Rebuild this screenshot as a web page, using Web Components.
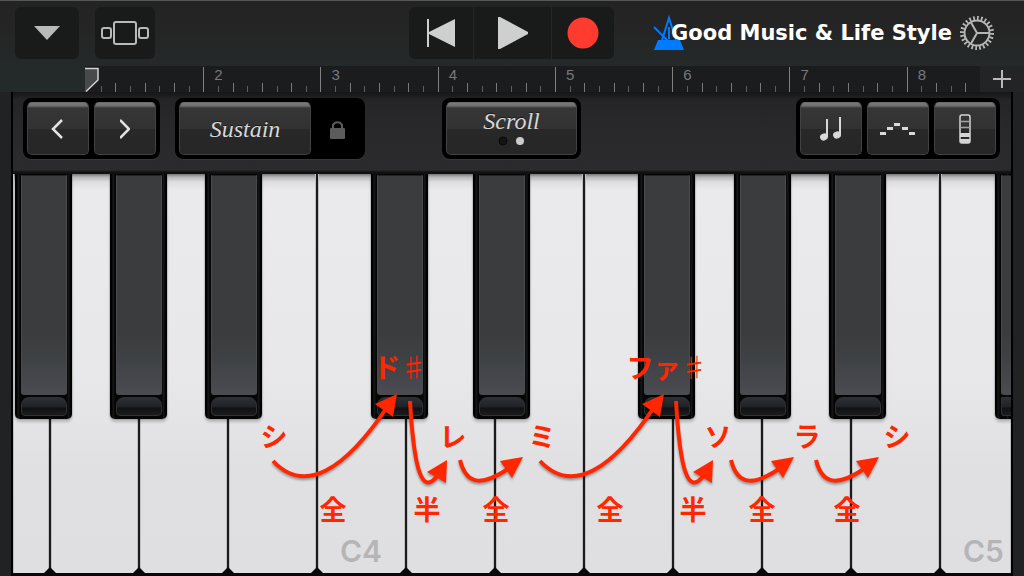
<!DOCTYPE html>
<html lang="ja">
<head>
<meta charset="utf-8">
<title>Keyboard</title>
<style>
  html, body { margin: 0; background: #212224; }
  body { font-family: "Liberation Sans", sans-serif; }
</style>
</head>
<body>
<studio-app></studio-app>

<script>
const define = (name, html, setup) => customElements.define(name, class extends HTMLElement {
  constructor() {
    super();
    this.attachShadow({ mode: "open" }).innerHTML = html;
  }
  connectedCallback() { if (setup) setup(this, this.shadowRoot); }
});

/* Flat button of the top bar */
define("bar-button", `
<style>
  :host { display: block; }
  button { display: grid; place-items: center; width: 100%; height: 100%; margin: 0; padding: 0; border: 0; background: none; color: #d0d0d0; cursor: pointer; }
</style>
<button type="button"><slot></slot></button>`,
(el, root) => root.querySelector("button").setAttribute("aria-label", el.getAttribute("label")));

define("top-bar", `
<style>
  :host { display: grid; grid-template-columns: 1fr auto 1fr; align-items: center; height: 66px; box-sizing: border-box;
    padding: 0 30px 1px 15px; border-top: 1px solid #565757; background: linear-gradient(#232323, #252525 50%, #24292a); }
  svg { display: block; }
  .left { display: flex; gap: 16px; }
  .tile, .transport { height: 52px; border-radius: 6px; background: #191a1a; }
  .transport { display: flex; margin-left: 14px; }
  .transport > * + * { border-left: 1px solid #242525; }
  .w60 { width: 60px; } .w64 { width: 64px; } .w62 { width: 62px; } .w77 { width: 77px; }
  .right { display: flex; justify-content: flex-end; align-items: center; }
  .title { margin: 0 8px 0 -14px; position: relative; color: #fff; font: bold 21px/28px "DejaVu Sans", sans-serif; white-space: nowrap; pointer-events: none; }
</style>
<div class="left">
  <bar-button class="tile w64" label="Menu"><svg width="28" height="16"><path d="M1 1h26L14 15z" fill="#b9b9b9"/></svg></bar-button>
  <bar-button class="tile w60" label="Browser"><svg width="48" height="24" fill="none" stroke="#b9b9b9" stroke-width="2"><rect x="13" y="1" width="22" height="22" rx="2"/><rect x="1" y="7" width="9" height="10" rx="2"/><rect x="38" y="7" width="9" height="10" rx="2"/></svg></bar-button>
</div>
<div class="transport">
  <bar-button class="w64" label="Rewind"><svg width="28" height="30" fill="#cfcfcf"><path d="M0 1h2v13L28 1v28L2 16v13H0z"/></svg></bar-button>
  <bar-button class="w77" label="Play"><svg width="32" height="32" fill="#cfcfcf"><path d="M1 0h2l28 15v2L3 32H1z"/></svg></bar-button>
  <bar-button class="w62" label="Record"><svg width="32" height="32"><circle cx="16" cy="16" r="15.5" fill="#ff3b30"/></svg></bar-button>
</div>
<div class="right">
  <bar-button label="Metronome"><svg width="32" height="36"><path fill="none" stroke="#007aff" stroke-width="2" d="M9 25L16 3L23 25M16 12v12M1 12L16 27"/><path fill="#007aff" d="M5 25h22l4 10H1z"/></svg></bar-button>
  <span class="title">Good Music &amp; Life Style</span>
  <bar-button label="Settings"><svg width="34" height="34" viewBox="-17 -17 34 34" fill="none" stroke="#b5b5b5"><circle r="12.5" stroke-width="2"/><circle r="15" stroke-width="4" pathLength="48" stroke-dasharray="0.9 1.1"/><path stroke-width="2" d="M0 0H12M0 0L-6 -10.500M0 0L-6 10.500"/></svg></bar-button>
</div>`);

/* Bar ruler: one column per eighth of a bar */
define("bar-ruler", `
<style>
  :host { display: flex; height: 26px; padding-left: 86px; background: linear-gradient(90deg, #24292a 85px, #222426 0); }
  .scale { flex: 1; display: grid; grid-template-columns: repeat(61, minmax(0, 1fr)); align-items: end; background: #1b1c1e; position: relative; }
  i { display: block; height: 6px; border-left: 1px solid #5d5e60; }
  i.mid { height: 9px; border-color: #77787a; }
  i.bar { height: 25px; border-color: #808183; font: normal 15px/16px "Liberation Sans", sans-serif; color: #77787a; text-indent: 10px; white-space: nowrap; }
  svg { position: absolute; left: -1px; top: 1px; }
  bar-button { width: 44px; }
  bar-button svg { position: static; display: block; }
</style>
<div class="scale"><svg width="14" height="25"><path d="M0 1h13v12L0 25z" fill="#48494b"/><path d="M0 1.500H13V13L1 24.500" fill="none" stroke="#d2d2d2" stroke-width="1.500"/></svg></div>
<bar-button label="Add section"><svg width="18" height="18"><path d="M9 0v18M0 9h18" stroke="#b8b8b8" stroke-width="2"/></svg></bar-button>`,
(el, root) => {
  const scale = root.querySelector(".scale");
  for (let n = 0; n < 61; n++) {
    const tick = document.createElement("i");
    if (n === 0) tick.style.visibility = "hidden";
    else if (n % 8 === 0) { tick.className = "bar"; tick.textContent = n / 8 + 1; }
    else if (n % 2 === 0) tick.className = "mid";
    scale.append(tick);
  }
});

/* Glossy raised button */
define("gloss-button", `
<style>
  :host { display: block; width: 62px; }
  button { display: grid; place-items: center; width: 100%; height: 100%; margin: 0; padding: 0; border: 1px solid #424242; border-top-color: #6a6a6a; border-radius: 5px;
    background: linear-gradient(#7b7b7b, #6c6c6c 3px, #363636 5px, #323232 50%, #282828 50%, #262626); color: #d8d8d8; cursor: pointer; font: italic 24px/24px "Liberation Serif", serif; text-shadow: 0 -1px #0008; }
</style>
<button type="button"><slot></slot></button>`,
(el, root) => { if (el.hasAttribute("label")) root.querySelector("button").setAttribute("aria-label", el.getAttribute("label")); });

define("control-strip", `
<style>
  :host { display: grid; grid-template-columns: 1fr auto 1fr; align-items: start; height: 82px; box-sizing: border-box; padding: 6px 11px 0 10px;
    background: linear-gradient(#161617, #252527 8px, #29292b 50%, #2b2b2d 78px, #111 80px); }
  svg { display: block; }
  .left { display: flex; gap: 15px; }
  .group { display: flex; gap: 5px; height: 61px; box-sizing: border-box; padding: 4px; border-radius: 8px; background: #000; box-shadow: 0 1px 1px #39393b; }
  .right { justify-self: end; }
  .sustain { width: 132px; } .scroll { width: 131px; }
  .lock { width: 45px; }
  .stack { display: grid; justify-items: center; gap: 2px; padding-bottom: 2px; }
</style>
<div class="left">
  <div class="group">
    <gloss-button label="Octave down"><svg width="14" height="22" fill="none" stroke="#e2e2e2" stroke-width="2.500"><path d="M11 2L2 11l9 9"/></svg></gloss-button>
    <gloss-button label="Octave up"><svg width="10" height="22" fill="none" stroke="#e2e2e2" stroke-width="2.500"><path d="M0 2l9 9-9 9"/></svg></gloss-button>
  </div>
  <div class="group">
    <gloss-button class="sustain">Sustain</gloss-button>
    <bar-button class="lock" label="Lock sustain"><svg width="20" height="20"><path d="M4 10V6a5 5 0 0 1 9 0v4" fill="none" stroke="#5c5c5c" stroke-width="2"/><rect x="1" y="9" width="15" height="11" rx="1" fill="#5c5c5c"/></svg></bar-button>
  </div>
</div>
<div class="group">
  <gloss-button class="scroll"><span class="stack">Scroll<svg width="32" height="12"><circle cx="7" cy="6" r="4" fill="#141414" stroke="#080808"/><circle cx="24" cy="6" r="4" fill="#ccc"/></svg></span></gloss-button>
</div>
<div class="group right">
  <gloss-button label="Notes"><svg width="22" height="26" fill="#d8d8d8"><ellipse cx="4" cy="21" rx="4" ry="3.500" transform="rotate(-20 4 21)"/><path d="M6 3H8v18H6z"/><ellipse cx="17" cy="19" rx="4" ry="3.500" transform="rotate(-20 17 19)"/><path d="M19 1H21v18h-2z"/></svg></gloss-button>
  <gloss-button label="Arpeggiator"><svg width="36" height="14" fill="#d8d8d8"><path d="M0 10h6v3H0zM7 5h6v3H7zM14 1h6v3h-6zM22 5h6v3h-6zM29 10h6v3h-6z"/></svg></gloss-button>
  <gloss-button label="Keyboard size"><svg width="12" height="30"><rect x="1" y="1" width="10" height="28" rx="2" fill="none" stroke="#d4d4d4" stroke-width="1.500"/><path d="M1 7.500h10M1 13.500h10" stroke="#a4a4a4" stroke-width="1.500"/><path d="M1 19h10v4H1zM1 25h10v4H1z" fill="#d4d4d4"/></svg></gloss-button>
</div>`);

define("white-key", `
<style>
  :host { display: flex; align-items: flex-end; min-width: 0; box-sizing: border-box; border-right: 2px solid #1b1b1c; position: relative;
    background: linear-gradient(#777 0, #b5b5b7 3px, #dedee0 8px, #eaeaec 16px, #e8e8ea 50%, #e0e0e2 75%, #dfdfe1); box-shadow: inset -1px 0 #c0c0c2, inset 1px 0 #c0c0c2; }
  :host(:last-child) { border-right: 0; }
  :host(:not(:last-child))::after { content: ""; position: absolute; z-index: 1; right: -7px; bottom: 0; border: 6px solid transparent; border-top-width: 0; border-bottom-color: #080808; }
  .name { padding: 0 0 6px 22px; font: 600 30px/32px Inter, sans-serif; color: #b5b5b7; }
</style>
<span class="name"><slot></slot></span>`);

define("black-key", `
<style>
  :host { display: grid; grid-template-rows: 1fr 19px; gap: 2px; box-sizing: border-box; padding: 1px 5px 3px 6px; border-radius: 0 0 5px 5px; background: linear-gradient(90deg, #000 2px, #1a1b1c 3px, #050505 5px, #050505 calc(100% - 5px), #1a1b1c calc(100% - 3px), #000 calc(100% - 2px)); box-shadow: 0 3px 3px #0003, 0 0 1px #000; }
  .face { border: 1px solid #4a4b4e; border-top-color: #222; border-radius: 0 0 3px 3px; background: linear-gradient(#3b3c3e, #3b3c3d 72%, #3e4144 83%, #4b4b51); }
  .foot { border: 1px solid #303134; border-radius: 8px 8px 4px 4px; background: linear-gradient(#2c2f33, #202226 50%, #101113 60%, #1b1c1f); }
  :host([cut]) { border-radius: 0 0 0 5px; padding-right: 0; }
  :host([cut]) .face, :host([cut]) .foot { border-right: 0; border-radius: 0 0 0 3px; }
</style>
<div class="face"></div><div class="foot"></div>`);

/* Note names, step names and the arrows that join them; at="x y" in the drawing's own units */
define("note-label", `
<style>
  :host { position: absolute; transform: translate(-50%, -50%); font: bold 27px/32px "Noto Sans CJK JP", sans-serif; color: #ff2600; white-space: nowrap; }
  ::slotted(span) { font-weight: 300; }
</style><slot></slot>`,
(el) => {
  const [x, y] = el.getAttribute("at").split(" ").map(Number);
  el.style.left = (x - 13) / 998 * 100 + "%";
  el.style.top = (y - 174) / 402 * 100 + "%";
});

define("scale-notes", `
<style>
  :host { display: block; position: relative; pointer-events: none; }
  svg { position: absolute; width: 100%; height: 100%; overflow: visible; filter: drop-shadow(0 2px 1px #0005); }
</style>
<svg viewBox="13 174 998 402" preserveAspectRatio="none">
  <defs>
    <g id="long"><path d="M273 461C305 495 345 470 388 406" fill="none" stroke="#ff2600" stroke-width="4"/><path d="M397 394L375 404L393 417z" fill="#ff2600"/></g>
    <g id="half"><path d="M410 401C414 470 422 497 438 475" fill="none" stroke="#ff2600" stroke-width="4"/><path d="M447 460L427 472L446 483z" fill="#ff2600"/></g>
    <g id="whole"><path d="M460 460C467 488 485 484 508 469" fill="none" stroke="#ff2600" stroke-width="4"/><path d="M523 457L500 461L512 478z" fill="#ff2600"/></g>
  </defs>
  <use href="#long"/><use href="#half"/><use href="#whole"/>
  <use href="#long" x="267"/><use href="#half" x="266"/><use href="#whole" x="271"/><use href="#whole" x="356"/>
</svg>
<note-label at="274 436">シ</note-label>
<note-label at="400 367">ド<span>♯</span></note-label>
<note-label at="453 436">レ</note-label>
<note-label at="542 436">ミ</note-label>
<note-label at="667 367">ファ<span>♯</span></note-label>
<note-label at="718 436">ソ</note-label>
<note-label at="807 436">ラ</note-label>
<note-label at="897 436">シ</note-label>
<note-label at="333 509">全</note-label>
<note-label at="427 509">半</note-label>
<note-label at="496 509">全</note-label>
<note-label at="610 509">全</note-label>
<note-label at="693 509">半</note-label>
<note-label at="762 509">全</note-label>
<note-label at="847 509">全</note-label>`);

define("piano-keys", `
<style>
  :host { display: grid; background: #080808; }
  .white, .black, scale-notes { grid-area: 1 / 1; min-width: 0; }
  .white { display: grid; grid-template-columns: 38fr repeat(10, 89fr) 70fr; padding-bottom: 3px; }
  .black { display: grid; grid-template-rows: 245fr 157fr; z-index: 2;
    grid-template-columns: 2fr 57fr 38fr 57fr 38fr 57fr 109fr 57fr 45fr 57fr 108fr 57fr 39fr 57fr 38fr 57fr 109fr 16fr; }
  .black > * { grid-row: 1; }
  scale-notes { z-index: 3; }
</style>
<div class="white">
  <white-key></white-key><white-key></white-key><white-key></white-key><white-key></white-key>
  <white-key>C4</white-key><white-key></white-key><white-key></white-key><white-key></white-key>
  <white-key></white-key><white-key></white-key><white-key></white-key><white-key>C5</white-key>
</div>
<div class="black"></div>
<scale-notes></scale-notes>`,
(el, root) => {
  const layer = root.querySelector(".black");
  for (let n = 1; n <= 9; n++) {
    const key = document.createElement("black-key");
    key.style.gridColumn = n * 2;
    if (n === 9) key.setAttribute("cut", "");
    layer.append(key);
  }
});

define("studio-app", `
<style>
  :host { display: flex; flex-direction: column; min-height: 100vh; }
  main { flex: 1; display: flex; flex-direction: column; margin: 0 11px; border: solid #000; border-width: 0 2px; }
  piano-keys { flex: 1; }
</style>
<top-bar></top-bar>
<bar-ruler></bar-ruler>
<main><control-strip></control-strip><piano-keys></piano-keys></main>`);
</script>
</body>
</html>
